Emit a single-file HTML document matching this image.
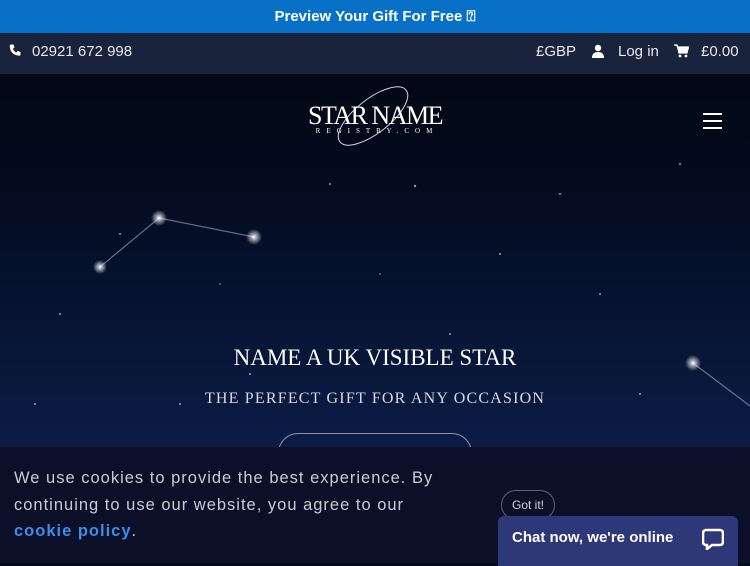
<!DOCTYPE html>
<html><head><meta charset="utf-8"><style>
*{margin:0;padding:0;box-sizing:border-box}
body{width:750px;height:563px;overflow:hidden;font-family:"Liberation Sans",sans-serif;background:#030a18;position:relative}
.top{height:33px;background:#0870c6;color:#fff;text-align:center;font-size:15px;font-weight:bold;line-height:33px}
.bar{height:41px;background:#19233b;color:#e6e9ef;font-size:15px;line-height:37px;position:relative}
.hero{position:absolute;top:74px;left:0;width:750px;height:374px;background:linear-gradient(#020814 0%,#030b1f 30%,#081638 75%,#0c1c46 100%)}
.serif{font-family:"Liberation Serif",serif;color:#fff;position:absolute;width:100%;text-align:center}
.cookie{position:absolute;top:447px;left:0;width:750px;height:116px;background:#0b0f27}
.ct{position:absolute;left:14px;top:18px;width:440px;color:#c9ccd6;font-size:16.5px;line-height:26.5px;letter-spacing:1px}
.ct a{color:#3d8de6;font-weight:bold;text-decoration:none}
</style></head><body>
<div class="top">Preview Your Gift For Free ⍰</div>
<div class="bar">
<svg style="position:absolute;left:9px;top:11px" width="13" height="13" viewBox="0 0 13 13"><path d="M2 0.5l2.5 0 1 3-1.6 1.3q1 2.5 3.3 3.8l1.3-1.6 3 1v2.5q0 1.2-1.3 1.2Q1 11 0.8 1.8 0.8 0.5 2 0.5z" fill="#fff"/></svg>
<span style="position:absolute;left:32px">02921 672 998</span>
<span style="position:absolute;left:536px">£GBP</span>
<svg style="position:absolute;left:591px;top:11px" width="14" height="14" viewBox="0 0 14 14"><circle cx="7" cy="4" r="3.2" fill="#fff"/><path d="M1 14 Q1 8 7 8 Q13 8 13 14Z" fill="#fff"/></svg>
<span style="position:absolute;left:618px">Log in</span>
<svg style="position:absolute;left:674px;top:11px" width="15" height="14" viewBox="0 0 15 14"><path d="M0 1h3l2 8h8l1.5-6H4" fill="#fff" stroke="#fff" stroke-width="1.2"/><circle cx="6" cy="12" r="1.4" fill="#fff"/><circle cx="12" cy="12" r="1.4" fill="#fff"/></svg>
<span style="position:absolute;left:701px">£0.00</span>
</div>
<div class="hero">
<svg width="750" height="374" style="position:absolute;left:0;top:0">
<defs><radialGradient id="g"><stop offset="0" stop-color="#fff"/><stop offset=".35" stop-color="#fff" stop-opacity=".6"/><stop offset="1" stop-color="#fff" stop-opacity="0"/></radialGradient></defs>
<g fill="#fff" opacity=".6">
<circle cx="120" cy="160" r="1"/><circle cx="330" cy="110" r="1"/><circle cx="415" cy="112" r="1.2"/><circle cx="500" cy="180" r="1"/><circle cx="600" cy="220" r="1"/><circle cx="60" cy="240" r="1"/><circle cx="250" cy="300" r="1"/><circle cx="680" cy="90" r="1"/><circle cx="560" cy="120" r="1"/><circle cx="35" cy="330" r="1"/><circle cx="180" cy="330" r="1"/><circle cx="450" cy="260" r="1"/><circle cx="640" cy="320" r="1"/><circle cx="380" cy="200" r="0.8"/><circle cx="220" cy="210" r="0.8"/>
</g>
<g stroke="#9aa6c6" stroke-width="1.3" opacity=".6"><line x1="100" y1="193" x2="159" y2="144"/><line x1="159" y1="144" x2="254" y2="163"/><line x1="693" y1="289" x2="750" y2="332"/></g>
<g fill="url(#g)"><circle cx="100" cy="193" r="7"/><circle cx="159" cy="144" r="8"/><circle cx="254" cy="163" r="8"/><circle cx="693" cy="289" r="8"/></g>
<ellipse cx="373" cy="42" rx="42" ry="17" transform="rotate(-38 373 42)" fill="none" stroke="#cfd6e6" stroke-width="1"/>
</svg>
<div class="serif" style="top:27px;font-size:26px;left:0;letter-spacing:-1.5px">STAR&nbsp;NAME</div>
<div class="serif" style="top:53px;font-size:7px;letter-spacing:6px;left:2px">REGISTRY.COM</div>
<div style="position:absolute;left:703px;top:39px;width:19px"><div style="height:2px;background:#fff;margin-bottom:5px"></div><div style="height:2px;background:#fff;margin-bottom:5px"></div><div style="height:2px;background:#fff"></div></div>
<div class="serif" style="top:271px;font-size:23px">NAME A UK VISIBLE STAR</div>
<div class="serif" style="top:316px;font-size:16px;letter-spacing:1.2px;color:#d6dae6">THE PERFECT GIFT FOR ANY OCCASION</div>
<div style="position:absolute;left:278px;top:359px;width:194px;height:40px;border:1px solid #8a93ad;border-radius:20px"></div>
</div>
<div class="cookie">
<div class="ct">We use cookies to provide the best experience. By continuing to use our website, you agree to our <a>cookie policy</a>.</div>
<div style="position:absolute;left:501px;top:43px;width:54px;height:30px;border:1px solid #5a6180;border-radius:15px;color:#d0d3de;font-size:12px;text-align:center;line-height:28px">Got it!</div>
</div>
<div style="position:absolute;left:498px;top:516px;width:240px;height:50px;background:#2e3878;border-radius:6px 6px 0 0;color:#fff;font-weight:bold;font-size:15px;padding:13px 14px">Chat now, we're online
<svg style="position:absolute;right:14px;top:12px" width="22" height="22" viewBox="0 0 22 22"><path d="M4 2h14a3 3 0 0 1 3 3v9a3 3 0 0 1-3 3H10l-5 4v-4H4a3 3 0 0 1-3-3V5a3 3 0 0 1 3-3z" fill="none" stroke="#fff" stroke-width="2.6"/></svg></div>
</body></html>
